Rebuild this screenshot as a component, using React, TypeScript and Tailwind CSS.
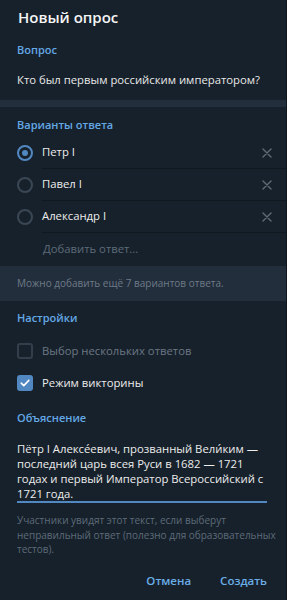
import React from 'react';

const options = ['Петр I', 'Павел I', 'Александр I'];

const CloseIcon = () => (
    <svg width="10" height="10" viewBox="0 0 10 10" className="shrink-0">
        <path d="M1 1L9 9M9 1L1 9" stroke="#5f6b77" strokeWidth="1.4" strokeLinecap="round" />
    </svg>
);

const Radio: React.FC<{ checked: boolean }> = ({ checked }) => (
    <div
        className={
            checked
                ? 'w-4 h-4 rounded-full border-2 border-[#5288c1] flex items-center justify-center shrink-0'
                : 'w-4 h-4 rounded-full border-2 border-[#3a4755] shrink-0'
        }
    >
        {checked && <div className="w-[6px] h-[6px] rounded-full bg-[#5288c1]" />}
    </div>
);

const Checkbox: React.FC<{ checked: boolean }> = ({ checked }) =>
    checked ? (
        <div className="w-4 h-4 rounded-[3px] bg-[#5288c1] flex items-center justify-center shrink-0">
            <svg width="10" height="8" viewBox="0 0 10 8">
                <path d="M1.2 4.2L3.8 6.6L8.8 1.4" stroke="#ffffff" strokeWidth="1.6" fill="none" strokeLinecap="round" strokeLinejoin="round" />
            </svg>
        </div>
    ) : (
        <div className="w-4 h-4 rounded-[3px] border-2 border-[#323e4b] shrink-0" />
    );

export default function App() {
    return (
        <div
            className="w-[287px] h-[600px] bg-[#17212b] flex flex-col border-r border-[#10161d] overflow-hidden"
            style={{ fontFamily: '"Open Sans", "Noto Sans", sans-serif' }}
        >
            <div className="h-[34px] flex items-center px-[18px] text-[15px] font-semibold text-[#f5f5f5]">
                Новый опрос
            </div>

            <div className="h-[32px] flex items-center px-[17px] text-[11px] font-semibold text-[#64a8e6]">
                Вопрос
            </div>
            <div className="h-[34px] flex items-center pb-[6px] px-[17px] text-[11.3px] text-[#e8e8e8] whitespace-nowrap">
                Кто был первым российским императором?
            </div>

            <div className="h-[7px] bg-[#232e3c] shrink-0" />

            <div className="h-[30px] pt-[6px] flex items-center px-[17px] text-[11px] font-semibold text-[#64a8e6]">
                Варианты ответа
            </div>

            {options.map((o, i) => (
                <div key={o} className="h-[32px] flex items-center pl-[17px]">
                    <Radio checked={i === 0} />
                    <div className="ml-[9px] flex-1 h-full flex items-center justify-between pr-[14px] border-b border-[#101820] text-[11.3px] text-[#ececec]">
                        <span>{o}</span>
                        <CloseIcon />
                    </div>
                </div>
            ))}

            <div className="h-[33px] flex items-center pl-[43px] text-[11.3px] text-[#5d6b79]">
                Добавить ответ...
            </div>

            <div className="h-[35px] bg-[#232e3c] flex items-center px-[17px] text-[10px] text-[#6d7a87] shrink-0">
                Можно добавить ещё 7 вариантов ответа.
            </div>

            <div className="h-[34px] flex items-center px-[17px] text-[11px] font-semibold text-[#64a8e6]">
                Настройки
            </div>
            <div className="h-[32px] flex items-center gap-[9px] px-[17px]">
                <Checkbox checked={false} />
                <span className="text-[11.3px] text-[#6b7784]">Выбор нескольких ответов</span>
            </div>
            <div className="h-[32px] flex items-center gap-[9px] px-[17px]">
                <Checkbox checked={true} />
                <span className="text-[11.3px] text-[#ececec]">Режим викторины</span>
            </div>

            <div className="h-[38px] flex items-center px-[17px] text-[11px] font-semibold text-[#64a8e6]">
                Объяснение
            </div>
            <div className="mx-[17px] mr-[19px] pt-[4px] text-[11.3px] leading-[15px] text-[#ececec] border-b-2 border-[#5288c1] whitespace-nowrap">
                Пётр I Алексе́евич, прозванный Вели́ким —<br />
                последний царь всея Руси в 1682 — 1721<br />
                годах и первый Император Всероссийский с<br />
                1721 года.
            </div>
            <div className="mt-[10px] px-[17px] text-[10px] leading-[14.5px] text-[#5d6b79] whitespace-nowrap">
                Участники увидят этот текст, если выберут<br />
                неправильный ответ (полезно для образовательных<br />
                тестов).
            </div>

            <div className="flex-1 flex items-end justify-end gap-[29px] pr-[19px] pb-[11px]">
                <button className="text-[11.5px] font-semibold text-[#6aaee8]">Отмена</button>
                <button className="text-[11.5px] font-semibold text-[#6aaee8]">Создать</button>
            </div>
        </div>
    );
}
